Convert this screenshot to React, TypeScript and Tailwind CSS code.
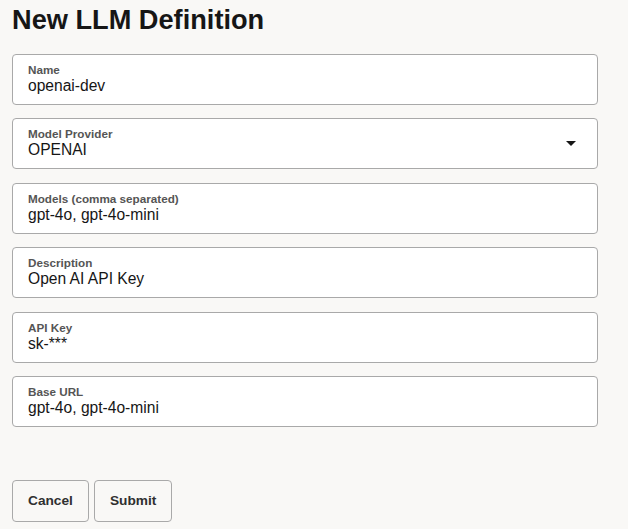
import * as React from 'react';

type Field = { label: string; value: string; select?: boolean };

const FIELDS: Field[] = [
  { label: 'Name', value: 'openai-dev' },
  { label: 'Model Provider', value: 'OPENAI', select: true },
  { label: 'Models (comma separated)', value: 'gpt-4o, gpt-4o-mini' },
  { label: 'Description', value: 'Open AI API Key' },
  { label: 'API Key', value: 'sk-***' },
  { label: 'Base URL', value: 'gpt-4o, gpt-4o-mini' },
];

function FormField({ label, value, select }: Field) {
  return (
    <div className="relative h-[51px] rounded-[4px] border border-[#a9a9a9] bg-white pl-[15px] pr-[40px] pt-[8px]">
      <div className="text-[11.7px] leading-[13px] font-bold text-[#555555]">{label}</div>
      <div className="text-[15.6px] leading-[20px] text-[#161616]">{value}</div>
      {select && (
        <svg
          viewBox="0 0 10 5"
          className="absolute right-[21px] top-[22px] h-[5px] w-[10px]"
          fill="#161616"
        >
          <path d="M0 0h10L5 5z" />
        </svg>
      )}
    </div>
  );
}

export default function App() {
  return (
    <div
      className="min-h-[529px] w-full bg-[#f9f8f6] px-3 pt-[4px]"
      style={{ fontFamily: '"Liberation Sans", Arial, sans-serif' }}
    >
      <h1 className="text-[27.2px] leading-[32px] font-bold text-[#161616]">New LLM Definition</h1>

      <div className="mt-[18px] flex w-[586px] flex-col gap-[13.4px]">
        {FIELDS.map((f) => (
          <FormField key={f.label} {...f} />
        ))}
      </div>

      <div className="mt-[53px] flex gap-[5px]">
        <button className="h-[42px] rounded-[4px] border border-[#a9a9a9] px-[15px] text-[13.7px] font-bold text-[#303030]">
          Cancel
        </button>
        <button className="h-[42px] rounded-[4px] border border-[#a9a9a9] px-[15px] text-[13.7px] font-bold text-[#303030]">
          Submit
        </button>
      </div>
    </div>
  );
}
